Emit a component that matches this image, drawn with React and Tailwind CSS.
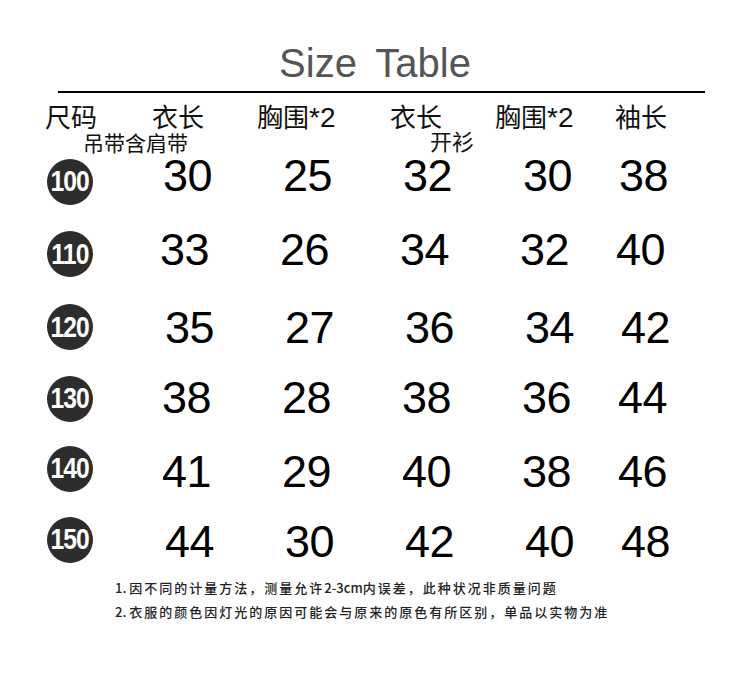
const rows = [
  { size: "100", h: "h-[72px]", gap: "ml-[70px]", shift: "-translate-y-[6px]", v: ["30", "25", "32", "30", "38"] },
  { size: "110", h: "h-[73px]", gap: "ml-[67px]", shift: "-translate-y-[5px]", v: ["33", "26", "34", "32", "40"] },
  { size: "120", h: "h-[73px]", gap: "ml-[72px]", shift: "translate-y-0", v: ["35", "27", "36", "34", "42"] },
  { size: "130", h: "h-[70px]", gap: "ml-[69px]", shift: "-translate-y-[1px]", v: ["38", "28", "38", "36", "44"] },
  { size: "140", h: "h-[70px]", gap: "ml-[69px]", shift: "translate-y-[3px]", v: ["41", "29", "40", "38", "46"] },
  { size: "150", h: "h-[72px]", gap: "ml-[72px]", shift: "translate-y-[2px]", v: ["44", "30", "42", "40", "48"] },
];

const cellW = ["w-[120px]", "w-[120px]", "w-[120px]", "w-[96px]", "w-[60px]"];

function Badge({ n }) {
  return (
    <div className="flex h-[46px] w-[46px] shrink-0 items-center justify-center rounded-full bg-[#2d2d2d]">
      <span className="inline-block scale-x-[0.85] text-[29px] font-bold leading-none tracking-[-1px] text-white">{n}</span>
    </div>
  );
}

export default function App() {
  const cjk = { fontFamily: '"Noto Sans CJK SC", "Liberation Sans", sans-serif' };
  return (
    <div className="h-[680px] w-[750px] overflow-hidden bg-white font-['Liberation_Sans',sans-serif] text-black">
      <div className="h-[83px] pt-[43px] text-center text-[40px] leading-none text-[#555] [word-spacing:8px]">Size Table</div>
      <div className="ml-[58px] mt-[8px] h-[1.5px] w-[647px] bg-black" />

      <div className="mt-[10px] flex h-[26px] pl-[45px] font-['Noto_Sans_CJK_SC',sans-serif] text-[26px] leading-none text-[#111]">
        <div className="w-[107px]">尺码</div>
        <div className="w-[105px]">衣长</div>
        <div className="w-[133px]">
          胸围<span className="font-['Liberation_Sans',sans-serif] text-[28px]">*2</span>
        </div>
        <div className="w-[105px]">衣长</div>
        <div className="w-[120px]">
          胸围<span className="font-['Liberation_Sans',sans-serif] text-[28px]">*2</span>
        </div>
        <div>袖长</div>
      </div>
      <div className="flex h-[17px] items-start pl-[83px] font-['Noto_Sans_CJK_SC',sans-serif] leading-none text-[#111]">
        <div className="mt-[3px] w-[347px] text-[21px]">吊带含肩带</div>
        <div className="mt-0 text-[22px]">开衫</div>
      </div>

      {rows.map((r) => (
        <div key={r.size} className={`flex items-center ${r.h}`}>
          <div className="ml-[47px]">
            <Badge n={r.size} />
          </div>
          <div className={`flex ${r.gap} ${r.shift}`}>
            {r.v.map((x, i) => (
              <div key={i} className={`${cellW[i]} text-[45px] leading-none tracking-[-0.5px]`}>
                {x}
              </div>
            ))}
          </div>
        </div>
      ))}

      <div className="pl-[115px] text-[13px] font-medium leading-[24px] tracking-[2px] text-[#222]" style={cjk}>
        <div>
          <span className="tracking-normal">1. </span>因不同的计量方法，测量允许<span className="tracking-normal">2-3cm</span>内误差，此种状况非质量问题
        </div>
        <div>
          <span className="tracking-normal">2. </span>衣服的颜色因灯光的原因可能会与原来的原色有所区别，单品以实物为准
        </div>
      </div>
    </div>
  );
}
